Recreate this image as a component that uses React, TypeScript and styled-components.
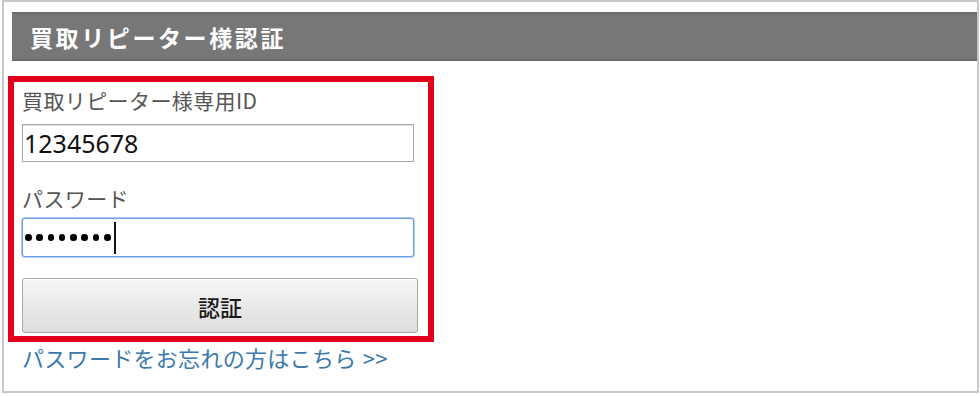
import styled, { createGlobalStyle } from 'styled-components';

const GlobalStyle = createGlobalStyle`
  html, body {
    margin: 0;
    padding: 0;
    background: #ffffff;
  }
  body {
    font-family: 'Noto Sans CJK JP', 'Noto Sans', sans-serif;
  }
`;

const Frame = styled.div`
  box-sizing: border-box;
  width: 977px;
  height: 393px;
  margin-left: 2px;
  border: 2px solid #c9c9c9;
  padding: 10px 0 0 4px;
  display: flex;
  flex-direction: column;
`;

const Header = styled.h1`
  box-sizing: border-box;
  height: 49px;
  margin: 0 0 0 4px;
  padding: 0 0 0 18px;
  display: flex;
  align-items: center;
  background: #777777;
  border-top: 2px solid #6c6c6c;
  border-bottom: 2px solid #6c6c6c;
  color: #ffffff;
  font-size: 23px;
  font-weight: bold;
  letter-spacing: 2.6px;
`;

const Highlight = styled.div`
  box-sizing: border-box;
  width: 426px;
  height: 266px;
  margin-top: 15px;
  border: 6px solid #e2001a;
  padding: 6px 0 0 8px;
  display: flex;
  flex-direction: column;
`;

const Label = styled.label<{ $gap?: number }>`
  display: block;
  height: 24px;
  margin-top: ${({ $gap = 0 }) => $gap}px;
  color: #555555;
  font-size: 21px;
  line-height: 24px;
  letter-spacing: 0.4px;
`;

const TextField = styled.input`
  box-sizing: border-box;
  width: 392px;
  height: 38px;
  margin: 12px 0 0;
  padding: 0 0 0 1px;
  border: 1px solid #a6a6a6;
  border-radius: 0;
  box-shadow: inset 0 1px 0 #e4e4e4;
  background: #ffffff;
  color: #111111;
  font-family: 'Noto Sans', 'Open Sans', sans-serif;
  font-size: 25px;
  outline: none;
`;

const PasswordField = styled.div`
  box-sizing: border-box;
  width: 392px;
  height: 39px;
  margin-top: 8px;
  padding-left: 2px;
  display: flex;
  align-items: center;
  border: 1px solid #6e9ce0;
  border-radius: 3px;
  box-shadow: 0 0 0 1px #b3cdf2;
  background: #ffffff;
`;

const Dot = styled.span`
  width: 6.5px;
  height: 6.5px;
  margin-right: 4.8px;
  border-radius: 50%;
  background: #000000;
`;

const Caret = styled.span`
  width: 2px;
  height: 32px;
  margin-left: -1px;
  background: #111111;
`;

const SubmitButton = styled.button`
  box-sizing: border-box;
  width: 396px;
  height: 55px;
  margin-top: 21px;
  border: 1px solid #a9a9a9;
  border-radius: 3px;
  background: linear-gradient(#f6f6f6, #dddddd);
  box-shadow: inset 0 1px 0 #ffffff;
  color: #1a1a1a;
  font-family: 'Noto Sans CJK JP', sans-serif;
  font-size: 22px;
  font-weight: 500;
  cursor: pointer;
`;

const ForgotLink = styled.a`
  display: block;
  margin: 1px 0 0 14px;
  color: #3b79ab;
  font-size: 22px;
  line-height: 28px;
  word-spacing: 1px;
  letter-spacing: 0.3px;
  text-decoration: none;
`;

export default function App() {
  return (
    <>
      <GlobalStyle />
      <Frame>
        <Header>買取リピーター様認証</Header>
        <Highlight>
          <Label htmlFor="repeater-id">買取リピーター様専用ID</Label>
          <TextField id="repeater-id" defaultValue="12345678" />
          <Label $gap={24}>パスワード</Label>
          <PasswordField>
            {Array.from({ length: 8 }, (_, i) => (
              <Dot key={i} />
            ))}
            <Caret />
          </PasswordField>
          <SubmitButton type="button">認証</SubmitButton>
        </Highlight>
        <ForgotLink href="#">パスワードをお忘れの方はこちら &gt;&gt;</ForgotLink>
      </Frame>
    </>
  );
}
